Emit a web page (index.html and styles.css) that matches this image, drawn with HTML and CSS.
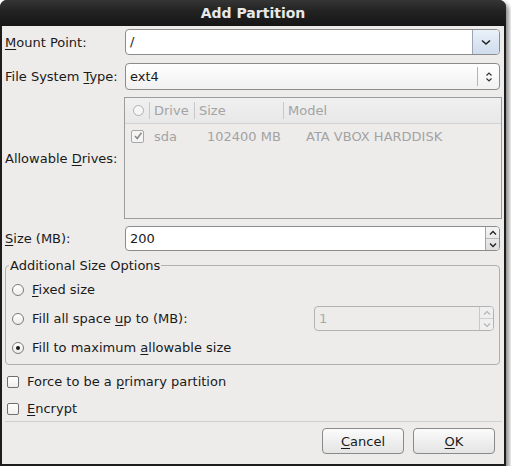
FILE: index.html
```html
<!DOCTYPE html>
<html>
<head>
<meta charset="utf-8">
<link rel="stylesheet" href="styles.css">
</head>
<body>
<div class="window">
  <div class="titlebar">Add Partition</div>
  <div class="content">
    <div class="form">
      <div class="lbl"><u>M</u>ount Point:</div>
      <div class="combo-entry">
        <span class="entry-text">/</span>
        <span class="combo-btn">
          <svg width="10" height="7" viewBox="0 0 10 7"><path d="M1 1.5 L5 5 L9 1.5" fill="none" stroke="#222" stroke-width="1.6"/></svg>
        </span>
      </div>

      <div class="lbl">File System <u>T</u>ype:</div>
      <div class="combo">
        <span class="combo-text">ext4</span>
        <span class="combo-sep"></span>
        <span class="combo-arrows">
          <svg width="8" height="12" viewBox="0 0 8 12"><path d="M1.5 4.5 L4 2 L6.5 4.5 M1.5 7.5 L4 10 L6.5 7.5" fill="none" stroke="#333" stroke-width="1.2"/></svg>
        </span>
      </div>

      <div class="lbl">Allowable <u>D</u>rives:</div>
      <div class="tree">
        <div class="tree-head">
          <span class="th th-0"><span class="th-circle"></span></span>
          <span class="th th-1">Drive</span>
          <span class="th th-2">Size</span>
          <span class="th th-3">Model</span>
        </div>
        <div class="tree-row">
          <span class="td td-0"><span class="tcheck"><svg width="10" height="10" viewBox="0 0 10 10"><path d="M2 5 L4.2 7.5 L8.5 1.8" fill="none" stroke="#8a8a8a" stroke-width="1.5"/></svg></span></span>
          <span class="td td-1">sda</span>
          <span class="td td-2">102400 MB</span>
          <span class="td td-3">ATA VBOX HARDDISK</span>
        </div>
      </div>

      <div class="lbl"><u>S</u>ize (MB):</div>
      <div class="spin">
        <span class="spin-text">200</span>
        <span class="spin-btns">
          <span class="spin-up"><svg width="8" height="6" viewBox="0 0 8 6"><path d="M1 4.5 L4 1.5 L7 4.5" fill="none" stroke="#222" stroke-width="1.3"/></svg></span>
          <span class="spin-down"><svg width="8" height="6" viewBox="0 0 8 6"><path d="M1 1.5 L4 4.5 L7 1.5" fill="none" stroke="#222" stroke-width="1.3"/></svg></span>
        </span>
      </div>
    </div>

    <fieldset class="frame">
      <legend class="frame-label">Additional Size Options</legend>
      <div class="radio-row">
        <span class="radio"></span>
        <span class="opt-text"><u>F</u>ixed size</span>
      </div>
      <div class="radio-row">
        <span class="radio"></span>
        <span class="opt-text grow">Fill all space <u>u</u>p to (MB):</span>
        <div class="spin spin-disabled">
          <span class="spin-text">1</span>
          <span class="spin-btns">
            <span class="spin-up"><svg width="8" height="6" viewBox="0 0 8 6"><path d="M1 4.5 L4 1.5 L7 4.5" fill="none" stroke="#b5b5b5" stroke-width="1.2"/></svg></span>
            <span class="spin-down"><svg width="8" height="6" viewBox="0 0 8 6"><path d="M1 1.5 L4 4.5 L7 1.5" fill="none" stroke="#b5b5b5" stroke-width="1.2"/></svg></span>
          </span>
        </div>
      </div>
      <div class="radio-row">
        <span class="radio radio-on"><span class="radio-dot"></span></span>
        <span class="opt-text">Fill to maximum <u>a</u>llowable size</span>
      </div>
    </fieldset>

    <div class="check-row check-first">
      <span class="checkbox"></span>
      <span class="opt-text">Force to be a <u>p</u>rimary partition</span>
    </div>
    <div class="check-row">
      <span class="checkbox"></span>
      <span class="opt-text"><u>E</u>ncrypt</span>
    </div>

    <div class="separator"></div>

    <div class="buttons">
      <button class="btn"><u>C</u>ancel</button>
      <button class="btn"><u>O</u>K</button>
    </div>
  </div>
</div>
</body>
</html>
```

FILE: styles.css
```css
html, body {
  margin: 0;
  padding: 0;
  background: #ffffff;
}

body {
  font-family: "DejaVu Sans", "Liberation Sans", sans-serif;
  font-size: 13px;
  color: #1a1a1a;
}

u {
  text-decoration: underline;
  text-underline-offset: 2px;
}

.window {
  width: 502px;
  padding: 0 2px 2px 2px;
  background: #1c1c1c;
  border-radius: 7px 7px 0 0;
  box-shadow: 3px 3px 4px rgba(0, 0, 0, 0.45);
}

.titlebar {
  height: 26px;
  line-height: 26px;
  text-align: center;
  font-weight: bold;
  font-size: 14px;
  color: #e8e8e8;
  background: linear-gradient(#353535, #222222 45%, #161616);
  margin: 0 -2px;
  border-radius: 7px 7px 0 0;
}

.content {
  background: #edeceb;
  padding: 3px 4px 10px 3px;
}

.form {
  display: grid;
  grid-template-columns: 120px 1fr;
  grid-template-rows: 27px 27px 122px 25px;
  row-gap: 7px;
}

.lbl {
  align-self: center;
  white-space: nowrap;
}

/* combo with entry */
.combo-entry {
  height: 26px;
  box-sizing: border-box;
  display: flex;
  border: 1px solid #8c8c8c;
  border-radius: 4px;
  background: #ffffff;
  overflow: hidden;
}

.entry-text {
  flex: 1;
  padding-left: 4px;
  line-height: 24px;
}

.combo-btn {
  width: 26px;
  border-left: 1px solid #9aa6b4;
  background: linear-gradient(#eaf1f9, #cfdcec);
  display: flex;
  align-items: center;
  justify-content: center;
}

/* plain combo */
.combo {
  height: 27px;
  box-sizing: border-box;
  display: flex;
  align-items: center;
  border: 1px solid #8c8c8c;
  border-radius: 4px;
  background: linear-gradient(#ffffff, #f1f1f1);
}

.combo-text {
  flex: 1;
  padding-left: 4px;
}

.combo-sep {
  width: 1px;
  height: 19px;
  background: #b4b4b4;
}

.combo-arrows {
  width: 21px;
  display: flex;
  align-items: center;
  justify-content: center;
}

/* tree */
.tree {
  margin-left: -1px;
  margin-right: -2px;
  border: 1px solid #9c9c9c;
  background: #edeceb;
  color: #a3a3a3;
}

.tree-head {
  display: flex;
  height: 25px;
  align-items: center;
  border-bottom: 1px solid #d2d2d2;
  background: linear-gradient(#f0f0f0, #e8e8e8);
}

.th {
  display: flex;
  align-items: center;
  height: 17px;
  padding-left: 4px;
  box-sizing: border-box;
}

.th-0 { width: 24px; padding-left: 8px; }
.th-1 { width: 45px; border-left: 1px solid #c8c8c8; }
.th-2 { width: 89px; border-left: 1px solid #c8c8c8; }
.th-3 { flex: 1; border-left: 1px solid #c8c8c8; }

.th-circle {
  width: 9px;
  height: 9px;
  border: 1px solid #b0b0b0;
  border-radius: 50%;
  background: #f6f6f6;
}

.tree-row {
  display: flex;
  align-items: center;
  height: 24px;
}

.td { white-space: nowrap; }
.td-0 { width: 23px; padding-left: 6px; display: flex; align-items: center; }
.td-1 { width: 53px; }
.td-2 { width: 99px; }

.tcheck {
  width: 11px;
  height: 11px;
  border: 1px solid #a8a8a8;
  border-radius: 2px;
  background: #f4f4f4;
  display: flex;
  align-items: center;
  justify-content: center;
}

/* spin button */
.spin {
  height: 25px;
  box-sizing: border-box;
  display: flex;
  border: 1px solid #8c8c8c;
  border-radius: 4px;
  background: #ffffff;
  overflow: hidden;
}

.spin-text {
  flex: 1;
  padding-left: 4px;
  line-height: 23px;
}

.spin-btns {
  width: 13px;
  display: flex;
  flex-direction: column;
  border-left: 1px solid #a5a5a5;
  background: linear-gradient(#f4f4f4, #dedede);
}

.spin-up, .spin-down {
  flex: 1;
  display: flex;
  align-items: center;
  justify-content: center;
}

.spin-up {
  border-bottom: 1px solid #b8b8b8;
}

.spin-disabled {
  width: 180px;
  height: 25px;
  border-color: #b2b2b2;
  background: #edeceb;
  color: #a8a8a8;
}

.spin-disabled .spin-btns {
  border-left-color: #c8c8c8;
  background: #efefef;
}

.spin-disabled .spin-up {
  border-bottom-color: #d0d0d0;
}

/* frame */
.frame {
  margin: 7px 0 0 0;
  padding: 2px 5px 2px 6px;
  border: 1px solid #b0b0b0;
  border-radius: 4px;
  min-width: 0;
}

.frame-label {
  padding: 0 1px;
  margin-left: -3px;
  line-height: 15px;
}

.radio-row {
  display: flex;
  align-items: center;
  height: 29px;
}

.radio {
  width: 10px;
  height: 10px;
  border: 1px solid #7a7a7a;
  border-radius: 50%;
  background: linear-gradient(#ffffff, #ececec);
  margin-right: 8px;
  display: flex;
  align-items: center;
  justify-content: center;
  flex: none;
}

.radio-dot {
  width: 4px;
  height: 4px;
  border-radius: 50%;
  background: #1a1a1a;
}

.opt-text {
  white-space: nowrap;
}

.grow {
  flex: 1;
}

/* checks */
.check-row {
  display: flex;
  align-items: center;
  height: 27px;
  padding-left: 2px;
}

.check-first {
  margin-top: 3px;
}

.checkbox {
  width: 10px;
  height: 10px;
  border: 1px solid #6f6f6f;
  border-radius: 2px;
  background: linear-gradient(#ffffff, #efefef);
  margin-right: 8px;
  flex: none;
}

.separator {
  height: 1px;
  background: #cfcfcf;
  margin-right: -2px;
  margin-top: -1px;
}

.buttons {
  display: flex;
  justify-content: flex-end;
  gap: 9px;
  padding-top: 6px;
  margin-right: 5px;
}

.btn {
  width: 82px;
  height: 26px;
  font-family: inherit;
  font-size: 13px;
  color: #1a1a1a;
  border: 1px solid #8a8a8a;
  border-radius: 4px;
  background: linear-gradient(#fbfbfb, #e4e4e4);
  padding: 0;
}
```
